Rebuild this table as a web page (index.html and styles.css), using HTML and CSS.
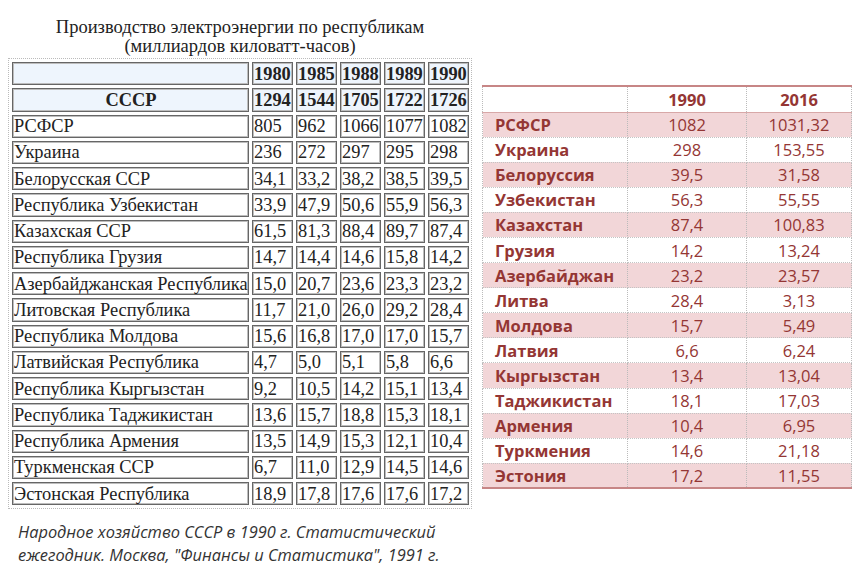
FILE: index.html
```html
<!DOCTYPE html>
<html lang="ru">
<head>
<meta charset="utf-8">
<link rel="stylesheet" href="styles.css">
</head>
<body>
<div class="page">
  <div class="left">
    <div class="title">Производство электроэнергии по республикам<br>(миллиардов киловатт-часов)</div>
    <div class="frame">
      <table class="old">
        <tr class="head"><td class="name"></td><td>1980</td><td>1985</td><td>1988</td><td>1989</td><td>1990</td></tr>
        <tr class="head"><td class="name total">СССР</td><td>1294</td><td>1544</td><td>1705</td><td>1722</td><td>1726</td></tr>
        <tr><td class="name">РСФСР</td><td>805</td><td>962</td><td>1066</td><td>1077</td><td>1082</td></tr>
        <tr><td class="name">Украина</td><td>236</td><td>272</td><td>297</td><td>295</td><td>298</td></tr>
        <tr><td class="name">Белорусская ССР</td><td>34,1</td><td>33,2</td><td>38,2</td><td>38,5</td><td>39,5</td></tr>
        <tr><td class="name">Республика Узбекистан</td><td>33,9</td><td>47,9</td><td>50,6</td><td>55,9</td><td>56,3</td></tr>
        <tr><td class="name">Казахская ССР</td><td>61,5</td><td>81,3</td><td>88,4</td><td>89,7</td><td>87,4</td></tr>
        <tr><td class="name">Республика Грузия</td><td>14,7</td><td>14,4</td><td>14,6</td><td>15,8</td><td>14,2</td></tr>
        <tr><td class="name">Азербайджанская Республика</td><td>15,0</td><td>20,7</td><td>23,6</td><td>23,3</td><td>23,2</td></tr>
        <tr><td class="name">Литовская Республика</td><td>11,7</td><td>21,0</td><td>26,0</td><td>29,2</td><td>28,4</td></tr>
        <tr><td class="name">Республика Молдова</td><td>15,6</td><td>16,8</td><td>17,0</td><td>17,0</td><td>15,7</td></tr>
        <tr><td class="name">Латвийская Республика</td><td>4,7</td><td>5,0</td><td>5,1</td><td>5,8</td><td>6,6</td></tr>
        <tr><td class="name">Республика Кыргызстан</td><td>9,2</td><td>10,5</td><td>14,2</td><td>15,1</td><td>13,4</td></tr>
        <tr><td class="name">Республика Таджикистан</td><td>13,6</td><td>15,7</td><td>18,8</td><td>15,3</td><td>18,1</td></tr>
        <tr><td class="name">Республика Армения</td><td>13,5</td><td>14,9</td><td>15,3</td><td>12,1</td><td>10,4</td></tr>
        <tr><td class="name">Туркменская ССР</td><td>6,7</td><td>11,0</td><td>12,9</td><td>14,5</td><td>14,6</td></tr>
        <tr><td class="name">Эстонская Республика</td><td>18,9</td><td>17,8</td><td>17,6</td><td>17,6</td><td>17,2</td></tr>
      </table>
    </div>
    <p class="source">Народное хозяйство СССР в 1990 г. Статистический<br>ежегодник. Москва, "Финансы и Статистика", 1991 г.</p>
  </div>
  <div class="right">
    <table class="new">
      <thead>
        <tr><th class="c1"></th><th class="c2">1990</th><th class="c3">2016</th></tr>
      </thead>
      <tbody>
        <tr class="pink"><td>РСФСР</td><td>1082</td><td>1031,32</td></tr>
        <tr><td>Украина</td><td>298</td><td>153,55</td></tr>
        <tr class="pink"><td>Белоруссия</td><td>39,5</td><td>31,58</td></tr>
        <tr><td>Узбекистан</td><td>56,3</td><td>55,55</td></tr>
        <tr class="pink"><td>Казахстан</td><td>87,4</td><td>100,83</td></tr>
        <tr><td>Грузия</td><td>14,2</td><td>13,24</td></tr>
        <tr class="pink"><td>Азербайджан</td><td>23,2</td><td>23,57</td></tr>
        <tr><td>Литва</td><td>28,4</td><td>3,13</td></tr>
        <tr class="pink"><td>Молдова</td><td>15,7</td><td>5,49</td></tr>
        <tr><td>Латвия</td><td>6,6</td><td>6,24</td></tr>
        <tr class="pink"><td>Кыргызстан</td><td>13,4</td><td>13,04</td></tr>
        <tr><td>Таджикистан</td><td>18,1</td><td>17,03</td></tr>
        <tr class="pink"><td>Армения</td><td>10,4</td><td>6,95</td></tr>
        <tr><td>Туркмения</td><td>14,6</td><td>21,18</td></tr>
        <tr class="pink"><td>Эстония</td><td>17,2</td><td>11,55</td></tr>
      </tbody>
    </table>
  </div>
</div>
</body>
</html>
```
FILE: styles.css
```css
* { box-sizing: border-box; }
html, body { margin: 0; padding: 0; background: #fff; }
.page {
  display: flex;
  align-items: flex-start;
  width: 856px;
  height: 577px;
  padding-left: 8px;
  gap: 10px;
}
.left { width: 464px; display: flex; flex-direction: column; }
.title {
  font-family: "Liberation Serif", "Times New Roman", serif;
  font-size: 18.5px;
  line-height: 19px;
  color: #222;
  text-align: center;
  padding-top: 18px;
  height: 58px;
}
.frame {
  border: 1px dotted #bbb;
  width: 464px;
}
.old {
  border-collapse: separate;
  border-spacing: 3px;
  width: 462px;
  table-layout: fixed;
  font-family: "Liberation Serif", "Times New Roman", serif;
  font-size: 18.4px;
  color: #222;
}
.old td {
  border: 1px solid #666;
  box-shadow: inset 0 0 0 1px #bdbdbd;
  height: 23.25px;
  padding: 0 0 0 1px;
  width: 41px;
  white-space: nowrap;
  line-height: 20px;
}
.old td.name { width: 237px; }
.old .head td { background: #eef5fd; font-weight: bold; }
.old td.total { text-align: center; }
.source {
  margin: 11px 0 0 10px;
  font-family: "Open Sans", sans-serif;
  font-style: italic;
  font-size: 16.4px;
  line-height: 23px;
  color: #333;
}
.right { padding-top: 85px; }
.new {
  border-collapse: collapse;
  table-layout: fixed;
  width: 369px;
  font-family: "Open Sans", sans-serif;
  font-size: 16.5px;
  color: #943634;
  border-top: 2px solid #c78686;
  border-bottom: 2px solid #c78686;
  border-left: 1px dotted #bbb;
  border-right: 1px dotted #bbb;
}
.new th, .new td {
  border-left: 1px dotted #bbb;
  border-right: 1px dotted #bbb;
  border-bottom: 1px dotted #c4c4c4;
  padding: 0;
  text-align: center;
  white-space: nowrap;
}
.new th { height: 26px; font-weight: bold; border-bottom: 1px solid #d8a8a8; }
.new td { height: 25.1px; }
.new .c1 { width: 145px; }
.new .c2 { width: 119px; }
.new .c3 { width: 105px; }
.new td:first-child { text-align: left; padding-left: 12px; font-weight: bold; }
.new tr.pink td { background: #f2d6d8; }
```
